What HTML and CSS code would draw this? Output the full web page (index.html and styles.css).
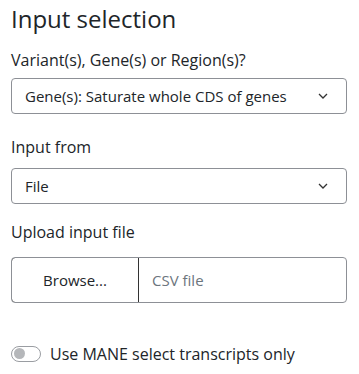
FILE: index.html
```html
<!DOCTYPE html>
<html lang="en">

<head>
  <meta charset="UTF-8" />
  <meta name="viewport" content="width=device-width, initial-scale=1.0" />
  <title>Input selection</title>
  <link rel="stylesheet" href="styles.css">
</head>

<body>
  <div class="panel">
    <h2 class="title">Input selection</h2>

    <div class="field field-type">
      <label class="field-label" for="inputType">Variant(s), Gene(s) or Region(s)?</label>
      <div class="select-wrap">
        <select id="inputType" class="select">
          <option>Gene(s): Saturate whole CDS of genes</option>
          <option>Variant(s)</option>
          <option>Region(s)</option>
        </select>
        <svg class="chevron" width="10" height="6" viewBox="0 0 10 6">
          <path d="M1 1 L5 5 L9 1" fill="none" stroke="#333" stroke-width="1.3" />
        </svg>
      </div>
    </div>

    <div class="field field-from">
      <label class="field-label" for="inputFrom">Input from</label>
      <div class="select-wrap">
        <select id="inputFrom" class="select">
          <option>File</option>
          <option>Text</option>
        </select>
        <svg class="chevron" width="10" height="6" viewBox="0 0 10 6">
          <path d="M1 1 L5 5 L9 1" fill="none" stroke="#333" stroke-width="1.3" />
        </svg>
      </div>
    </div>

    <div class="field field-upload">
      <label class="field-label" for="inputFile">Upload input file</label>
      <div class="file-box">
        <span class="file-btn">Browse...</span>
        <span class="file-name">CSV file</span>
      </div>
    </div>

    <div class="switch-row">
      <span class="switch"><span class="knob"></span></span>
      <span class="switch-label">Use MANE select transcripts only</span>
    </div>
  </div>
</body>

</html>
```

FILE: styles.css
```css
body {
  margin: 0;
  padding: 0 12px 0 11px;
  font-family: "Open Sans", sans-serif;
  color: #212529;
  background: #fff;
}

.panel {
  padding-top: 5px;
}

.title {
  font-size: 24px;
  font-weight: 400;
  line-height: 1.2;
  margin: 0 0 14px 0;
}

.field-label {
  display: block;
  font-size: 16px;
  line-height: 24px;
}

.field-type .field-label {
  margin-bottom: 6px;
}

.field-from {
  margin-top: 21px;
}

.field-from .field-label {
  margin-bottom: 9px;
}

.field-upload {
  margin-top: 16px;
}

.field-upload .field-label {
  margin-bottom: 13px;
}

.select-wrap {
  position: relative;
}

.select {
  appearance: none;
  -webkit-appearance: none;
  display: block;
  width: 100%;
  height: 36px;
  padding: 0 36px 0 13px;
  font-family: "Open Sans", sans-serif;
  font-size: 15px;
  color: #212529;
  background: #fff;
  border: 1px solid #8d9096;
  border-radius: 4px;
  box-sizing: border-box;
}

.chevron {
  position: absolute;
  right: 19px;
  top: 15px;
  pointer-events: none;
}

.file-box {
  display: flex;
  height: 46px;
  border: 1px solid #8d9096;
  border-radius: 4px;
  box-sizing: border-box;
  overflow: hidden;
}

.file-btn {
  display: flex;
  align-items: center;
  justify-content: center;
  width: 126px;
  margin: -1px 0 -1px -1px;
  border: 1px solid #333;
  border-radius: 4px 0 0 4px;
  font-size: 15px;
  font-weight: 500;
  color: #212529;
}

.file-name {
  display: flex;
  align-items: center;
  padding-left: 13px;
  font-size: 15px;
  color: #6c757d;
}

.switch-row {
  display: flex;
  align-items: center;
  gap: 9px;
  margin-top: 39px;
}

.switch {
  display: flex;
  align-items: center;
  width: 30px;
  height: 16px;
  padding: 0 2px;
  border: 1px solid #9a9da2;
  border-radius: 8px;
  box-sizing: border-box;
}

.knob {
  width: 11px;
  height: 11px;
  border-radius: 50%;
  background: #b5b7ba;
}

.switch-label {
  font-size: 16px;
  line-height: 24px;
}
```
